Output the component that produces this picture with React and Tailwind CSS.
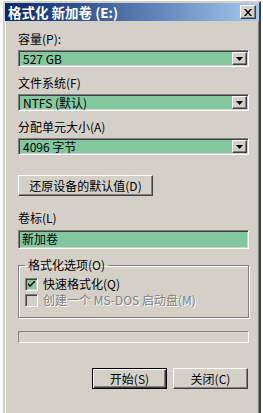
import React from "react";

// ── Helpers: clásico estilo Windows 2000 ─────────────────────────────────────
const FONT = { fontFamily: '"Noto Sans CJK SC", "Liberation Sans", sans-serif' };

const raised =
  "border border-t-white border-l-white border-r-[#404040] border-b-[#404040] shadow-[inset_-1px_-1px_#808080]";
const sunken =
  "border border-t-[#808080] border-l-[#808080] border-r-white border-b-white shadow-[inset_1px_1px_#404040,inset_-1px_-1px_#d4d0c8]";

function Label({ children, className = "" }) {
  return (
    <div className={`h-[16px] leading-[16px] text-[12px] text-black ${className}`}>
      {children}
    </div>
  );
}

function Combo({ value, className = "" }) {
  return (
    <div className={`h-[17px] flex bg-[#82c89e] p-[1px] ${sunken} ${className}`}>
      <div className="flex-1 pl-[3px] text-[12px] leading-[14px] text-black">
        {value}
      </div>
      <div className={`w-[15px] h-full bg-[#d4d0c8] flex items-center justify-center ${raised}`}>
        <svg width="7" height="4" viewBox="0 0 7 4">
          <path d="M0 0h7L3.5 4z" fill="#000" />
        </svg>
      </div>
    </div>
  );
}

function Button({ children, isDefault = false, className = "" }) {
  const cls = isDefault
    ? "border border-black shadow-[inset_1px_1px_white,inset_-1px_-1px_#404040,inset_-2px_-2px_#808080]"
    : raised;
  return (
    <div
      className={`h-[21px] bg-[#d4d0c8] flex items-center justify-center text-[12px] text-black ${cls} ${className}`}
    >
      {children}
    </div>
  );
}

function Check({ checked, disabled, children }) {
  return (
    <div className="flex items-center h-[16px]">
      <div
        className={`w-[13px] h-[13px] flex items-center justify-center ${sunken} ${
          disabled ? "bg-[#d4d0c8]" : "bg-[#82c89e]"
        }`}
      >
        {checked && (
          <svg width="7" height="7" viewBox="0 0 7 7">
            <path d="M0 2v2l2 2 5-5V-1L2 4z" fill="#000" />
          </svg>
        )}
      </div>
      <span
        className={`ml-[5px] text-[12px] leading-[16px] ${
          disabled ? "text-[#808080] [text-shadow:1px_1px_#fff]" : "text-black"
        }`}
      >
        {children}
      </span>
    </div>
  );
}

// ── Componente principal ────────────────────────────────────────────────────
export default function App() {
  return (
    <div className="w-[263px] h-[413px] overflow-hidden bg-white" style={FONT}>
      <div
        className="ml-[3px] mt-[1px] w-[258px] h-[420px] bg-[#d4d0c8] border-2 border-t-[#d4d0c8] border-l-[#d4d0c8] border-r-[#404040] border-b-[#404040] shadow-[inset_1px_1px_#fff,inset_-1px_-1px_#808080]"
      >
        {/* Barra de título */}
        <div className="h-[18px] flex items-center bg-gradient-to-r from-[#0a246a] to-[#a6caf0] pl-[3px] pr-[3px]">
          <span className="flex-1 text-white font-bold text-[13.5px] leading-[18px]">
            格式化 新加卷 (E:)
          </span>
          <div className={`w-[16px] h-[14px] bg-[#d4d0c8] flex items-center justify-center ${raised}`}>
            <svg width="8" height="7" viewBox="0 0 8 7">
              <path d="M0 0h2l2 2.5L6 0h2L5 3.5 8 7H6L4 4.5 2 7H0l3-3.5z" fill="#000" />
            </svg>
          </div>
        </div>

        {/* Contenido */}
        <div className="pl-[13px] pr-[8px] pt-[10px]">
          <Label>容量(P):</Label>
          <Combo value="527 GB" className="mt-[3px] w-[231px]" />

          <Label className="mt-[8px]">文件系统(F)</Label>
          <Combo value="NTFS (默认)" className="mt-[3px] w-[231px]" />

          <Label className="mt-[8px]">分配单元大小(A)</Label>
          <Combo value="4096 字节" className="mt-[3px] w-[231px]" />

          <Button className="mt-[20px] w-[135px]">还原设备的默认值(D)</Button>

          <Label className="mt-[14px]">卷标(L)</Label>
          <div
            className={`mt-[4px] w-[231px] h-[19px] bg-[#82c89e] pl-[3px] text-[12px] leading-[15px] text-black ${sunken}`}
          >
            新加卷
          </div>

          {/* Opciones de formato */}
          <fieldset className="mt-[9px] w-[231px] h-[60px] border border-[#808080] shadow-[1px_1px_#fff,inset_1px_1px_#fff] pl-[6px] pt-[4px]">
            <legend className="px-[3px] text-[12px] leading-[14px] text-black">
              格式化选项(O)
            </legend>
            <Check checked>快速格式化(Q)</Check>
            <Check disabled>创建一个 MS-DOS 启动盘(M)</Check>
          </fieldset>

          {/* Barra de progreso */}
          <div className="mt-[13px] w-[231px] h-[12px] border border-t-[#808080] border-l-[#808080] border-r-white border-b-white" />

          <div className="mt-[25px] w-[230px] flex justify-end gap-[6px]">
            <Button isDefault className="w-[75px]">开始(S)</Button>
            <Button className="w-[75px]">关闭(C)</Button>
          </div>
        </div>
      </div>
    </div>
  );
}
